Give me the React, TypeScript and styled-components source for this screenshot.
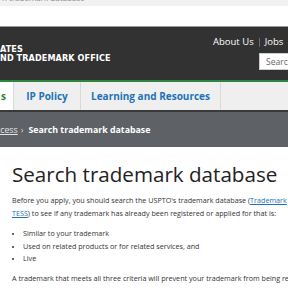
import React from "react";
import styled, { createGlobalStyle } from "styled-components";

const Global = createGlobalStyle`
  html, body { margin: 0; padding: 0; background: #fff; }
  body { font-family: "Open Sans", "Noto Sans", sans-serif; overflow: hidden; width: 288px; height: 288px; }
`;

const Page = styled.div`
  width: 288px;
  height: 288px;
  overflow: hidden;
  display: flex;
  flex-direction: column;
`;

const TopStrip = styled.div`
  height: 6px;
  flex: none;
  background: #f1f1f2;
  overflow: hidden;
`;

const TopStripText = styled.div`
  margin-top: -7px;
  padding-left: 2px;
  font-size: 8px;
  line-height: 9px;
  color: #8a8a8a;
  white-space: nowrap;
`;

const WhiteGap = styled.div`
  height: 20px;
  flex: none;
  background: #fff;
`;

const Header = styled.header`
  height: 53px;
  flex: none;
  background: #323232;
  border-top: 1px solid #9a9a9a;
  display: flex;
  justify-content: space-between;
`;

const Logo = styled.div`
  display: flex;
  flex-direction: column;
  padding-top: 18px;
  font-family: "DejaVu Sans Condensed", "Liberation Sans", sans-serif;
  font-weight: bold;
  font-size: 9px;
  line-height: 8.5px;
  color: #fff;
  letter-spacing: 0.1px;
`;

const Utility = styled.div`
  display: flex;
  flex-direction: column;
  align-items: flex-start;
  padding-top: 9px;
  width: 75px;
`;

const UtilLinks = styled.div`
  display: flex;
  align-items: center;
  font-size: 9.5px;
  line-height: 12px;
  color: #fff;
  white-space: nowrap;
`;

const UtilSep = styled.span`
  display: inline-block;
  width: 1px;
  height: 9px;
  background: #6a6a6a;
  margin: 0 5px;
`;

const SearchBox = styled.div`
  margin-top: 5px;
  margin-left: 46px;
  width: 42px;
  height: 17px;
  background: #fff;
  border: 1px solid #ccc;
  border-right: none;
  box-sizing: border-box;
  font-size: 8.5px;
  line-height: 15px;
  color: #666;
  padding-left: 6px;
  white-space: nowrap;
  overflow: hidden;
`;

const NavBar = styled.nav`
  height: 28px;
  flex: none;
  border-top: 2px solid #2e8540;
  border-bottom: 2px solid #3a3a3a;
  background: #efefef;
  display: flex;
`;

const NavTab = styled.div<{ $active?: boolean; $w: number }>`
  width: ${(p) => p.$w}px;
  flex: none;
  box-sizing: border-box;
  display: flex;
  align-items: center;
  justify-content: ${(p) => (p.$active ? "flex-start" : "center")};
  padding-left: ${(p) => (p.$active ? "1px" : "0")};
  background: ${(p) => (p.$active ? "#fff" : "transparent")};
  border-right: 1px solid #d9d9d9;
  color: ${(p) => (p.$active ? "#2e8540" : "#1d72b8")};
  font-weight: 700;
  font-size: 10px;
  white-space: nowrap;
`;

const Breadcrumb = styled.div`
  height: 35px;
  flex: none;
  background: #5e6166;
  display: flex;
  align-items: center;
  font-size: 8.8px;
  color: #fff;
  white-space: nowrap;
`;

const CrumbLink = styled.span`
  color: #e4e4e4;
  text-decoration: underline;
  margin-left: -4px;
`;

const CrumbSep = styled.span`
  color: #ddd;
  margin: 0 5px 0 3px;
`;

const CrumbCurrent = styled.span`
  font-weight: 700;
`;

const Main = styled.main`
  padding: 0 0 0 12px;
  color: #333;
`;

const Title = styled.h1`
  margin: 14px 0 0;
  font-weight: 400;
  font-size: 20.6px;
  line-height: 26px;
  color: #222;
  white-space: nowrap;
`;

const Para = styled.p`
  margin: 7px 0 0;
  font-size: 7.2px;
  line-height: 12.5px;
  white-space: nowrap;
`;

const Link = styled.span`
  color: #1d72b8;
  text-decoration: underline;
`;

const List = styled.ul`
  margin: 8px 0 0;
  padding-left: 11px;
  font-size: 7.2px;
  line-height: 12.5px;
  white-space: nowrap;
  li::marker { font-size: 7px; }
`;

export default function App() {
  return (
    <Page>
      <Global />
      <TopStrip>
        <TopStripText>n trademark database</TopStripText>
      </TopStrip>
      <WhiteGap />
      <Header>
        <Logo>
          <span>ATES</span>
          <span>ND TRADEMARK OFFICE</span>
        </Logo>
        <Utility>
          <UtilLinks>
            About Us<UtilSep />Jobs<UtilSep />
          </UtilLinks>
          <SearchBox>Search</SearchBox>
        </Utility>
      </Header>
      <NavBar>
        <NavTab $active $w={14}>s</NavTab>
        <NavTab $w={67}>IP Policy</NavTab>
        <NavTab $w={140}>Learning and Resources</NavTab>
      </NavBar>
      <Breadcrumb>
        <CrumbLink>ccess</CrumbLink>
        <CrumbSep>›</CrumbSep>
        <CrumbCurrent>Search trademark database</CrumbCurrent>
      </Breadcrumb>
      <Main>
        <Title>Search trademark database</Title>
        <Para>
          Before you apply, you should search the USPTO's trademark database (<Link>Trademark</Link>
          <br />
          <Link>TESS</Link>) to see if any trademark has already been registered or applied for that is:
        </Para>
        <List>
          <li>Similar to your trademark</li>
          <li>Used on related products or for related services, and</li>
          <li>Live</li>
        </List>
        <Para>
          A trademark that meets all three criteria will prevent your trademark from being registered due to a
          <br />
          likelihood of confusion.
        </Para>
      </Main>
    </Page>
  );
}
